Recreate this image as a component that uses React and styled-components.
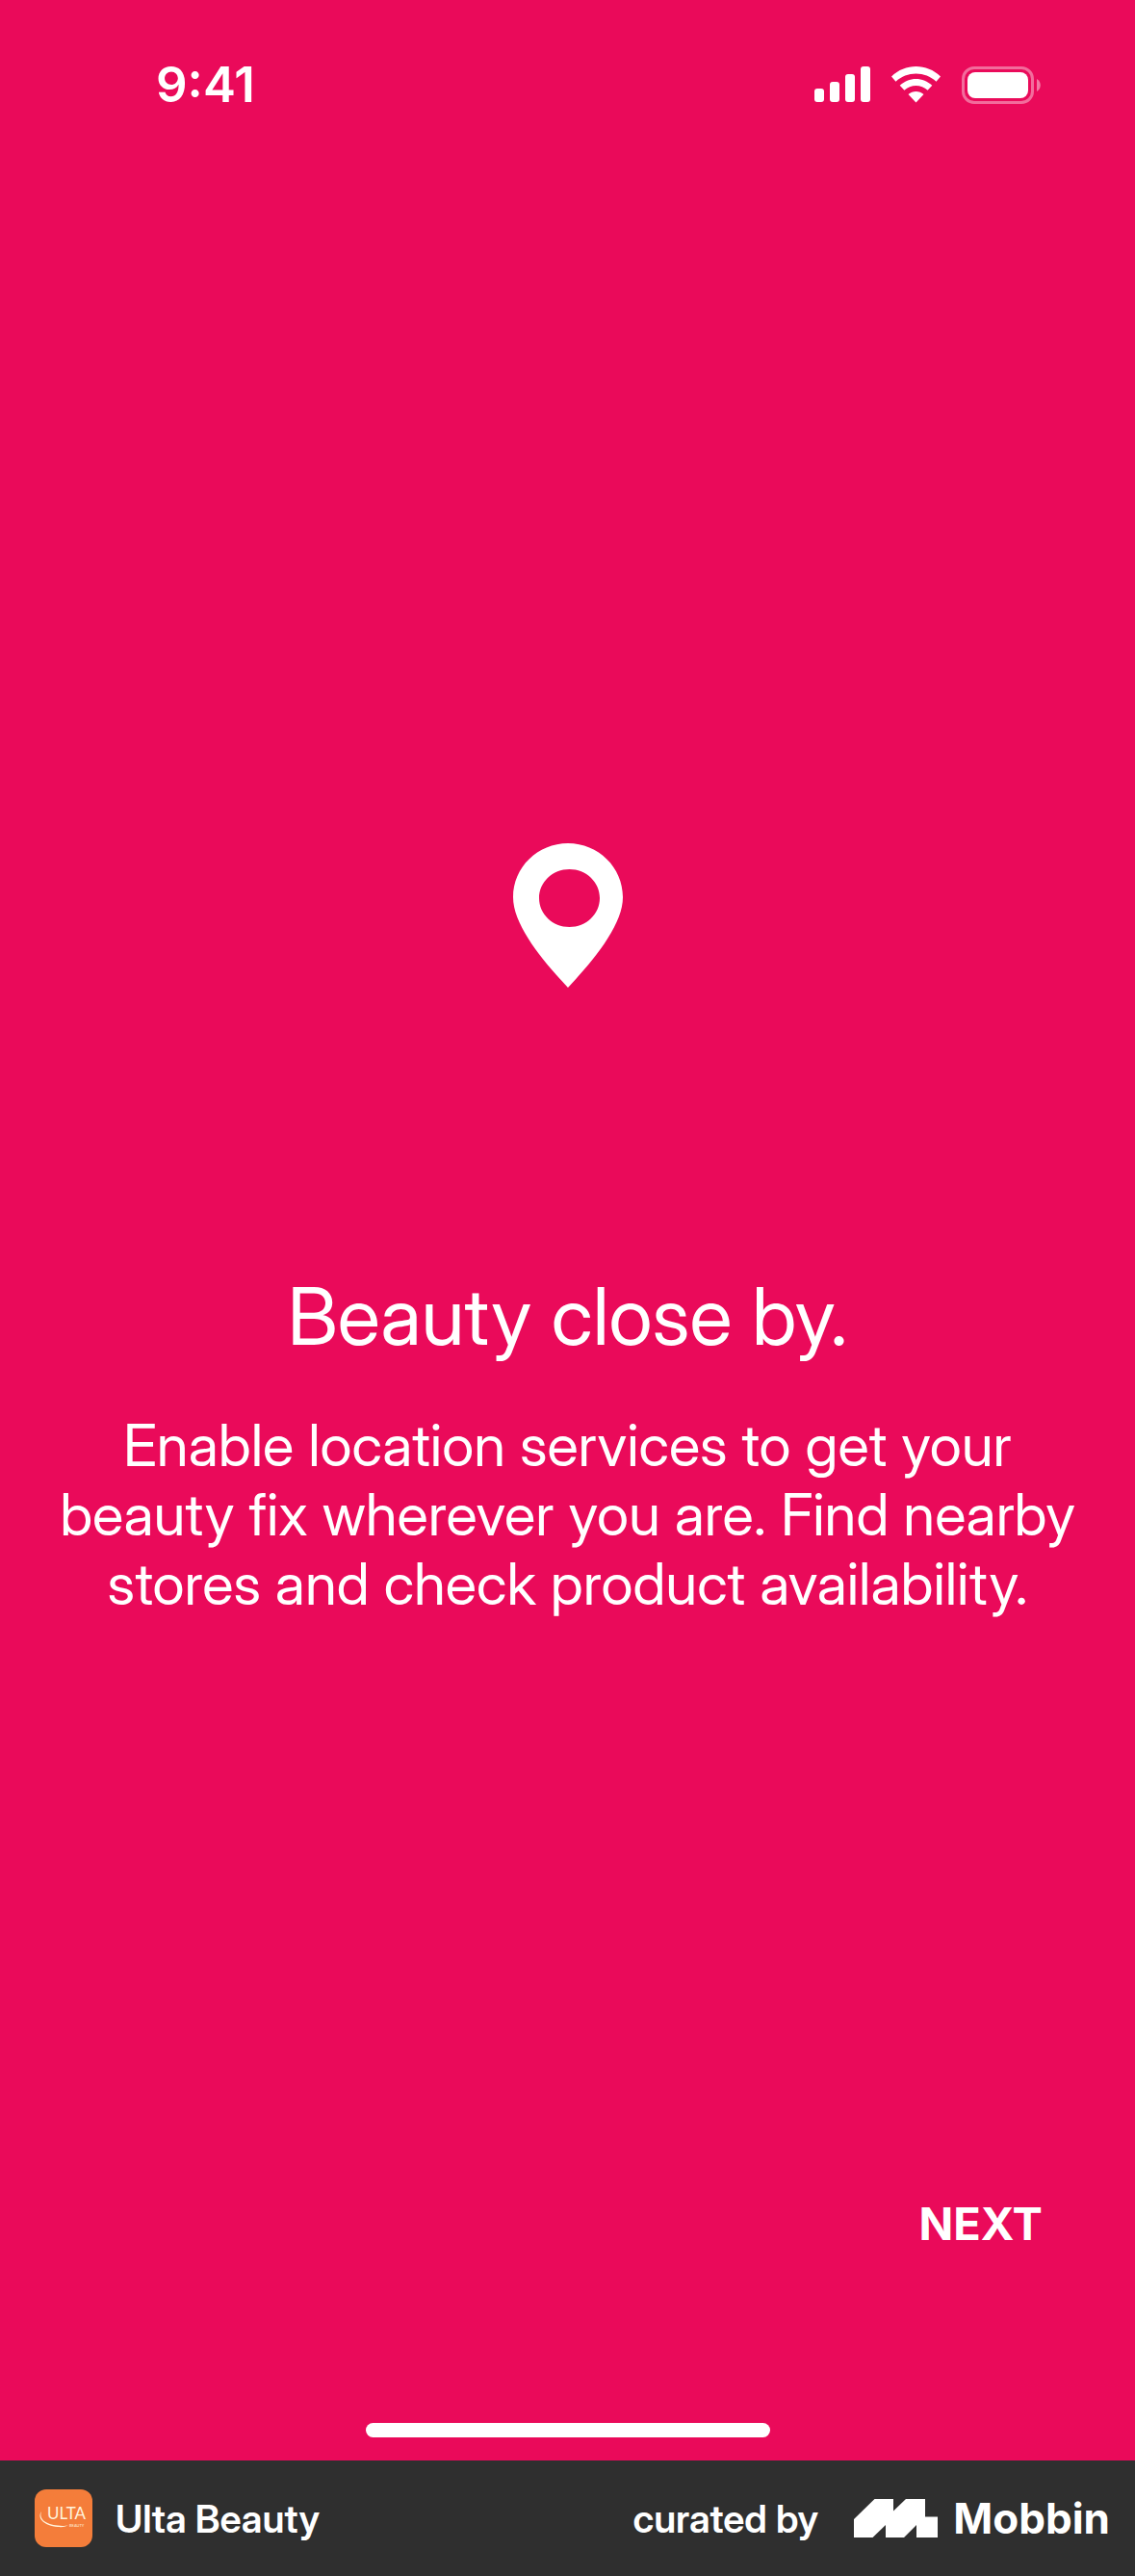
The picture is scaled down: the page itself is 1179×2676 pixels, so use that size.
import React from 'react';
import styled, { createGlobalStyle } from 'styled-components';

const PINK = '#ea0a5a';
const DISPLAY_FONT = '"Inter Display", Inter, "Liberation Sans", sans-serif';

const GlobalStyle = createGlobalStyle`
  *, *::before, *::after { box-sizing: border-box; }
  body {
    margin: 0;
    background: ${PINK};
    color: #fff;
    font-family: Inter, "Liberation Sans", sans-serif;
  }
`;

const Page = styled.div`
  display: flex;
  flex-direction: column;
  min-height: 100vh;
`;

const Screen = styled.main`
  flex: 1;
  display: flex;
  flex-direction: column;
  align-items: center;
  background: ${PINK};
`;

const StatusBar = styled.header`
  align-self: stretch;
  display: flex;
  align-items: center;
  justify-content: space-between;
  height: 176px;
  padding: 0 98px 0 162px;
`;

const Time = styled.time`
  font-size: 51px;
  line-height: 60px;
  font-weight: 600;
`;

const StatusIcons = styled.div`
  display: flex;
  align-items: center;
  gap: 22px;

  svg { display: block; }
`;

const Hero = styled.section`
  display: flex;
  flex-direction: column;
  align-items: center;
  padding: 700px 48px 0;
  font-family: ${DISPLAY_FONT};
  text-align: center;
`;

const Title = styled.h1`
  margin: 292px 0 0;
  font-size: 82px;
  line-height: 100px;
  font-weight: 400;
`;

const Copy = styled.p`
  margin: 47px 0 0;
  font-size: 60px;
  line-height: 72px;
`;

const NextButton = styled.button`
  align-self: flex-end;
  margin: auto 72px 0 0;
  padding: 24px;
  border: 0;
  background: none;
  color: inherit;
  font: inherit;
  font-size: 47px;
  line-height: 60px;
  font-weight: 700;
  cursor: pointer;
`;

const HomeIndicator = styled.div`
  width: 420px;
  height: 15px;
  margin: 153px 0 24px;
  border-radius: 8px;
  background: #fff;
`;

const Footer = styled.footer`
  display: flex;
  align-items: center;
  justify-content: space-between;
  height: 120px;
  padding: 0 26px 0 36px;
  background: #2f2f2f;
`;

const FooterGroup = styled.div`
  display: flex;
  align-items: center;
  gap: ${(p) => p.$gap}px;

  svg { display: block; }
`;

const FooterText = styled.span`
  padding-top: 2px;
  font-family: ${DISPLAY_FONT};
  font-size: 40px;
  line-height: 48px;
  font-weight: 600;
`;

const BrandName = styled.span`
  font-size: 44px;
  line-height: 48px;
  font-weight: 700;
`;

const SignalIcon = () => (
  <svg width="58" height="38" viewBox="0 0 58 38" fill="#fff" aria-hidden="true">
    <rect x="0" y="23" width="10" height="14" rx="3" />
    <rect x="16" y="16" width="10" height="21" rx="3" />
    <rect x="32" y="8" width="10" height="29" rx="3" />
    <rect x="48" y="0" width="10" height="37" rx="3" />
  </svg>
);

const WifiIcon = () => (
  <svg width="51" height="38" viewBox="0 0 51 38" fill="#fff" aria-hidden="true">
    <path d="M0 10.500C14-3.500 37-3.500 51 10.500L46.500 15.700C35 4.700 16 4.700 4.500 15.700Z" />
    <path d="M8.700 19.800C18 10.600 33 10.600 42.300 19.800L37.600 24.800C31 18.300 20 18.300 13.400 24.800Z" />
    <path d="M17.500 29C22 25 29 25 33.500 29L25.500 37.500Z" />
  </svg>
);

const BatteryIcon = () => (
  <svg width="82" height="39" viewBox="0 0 82 39" aria-hidden="true">
    <rect x="1.500" y="1.500" width="72" height="36" rx="11.500" fill="none" stroke="#fff" strokeOpacity=".4" strokeWidth="3" />
    <rect x="6" y="6" width="63" height="27" rx="8" fill="#fff" />
    <path d="M78 13C83 15.500 83 23.500 78 26Z" fill="#fff" fillOpacity=".45" />
  </svg>
);

const PinIcon = () => (
  <svg width="114" height="150" viewBox="0 0 114 150" fill="#fff" aria-hidden="true">
    <path
      fillRule="evenodd"
      d="M57 0C25.500 0 0 25 0 56C0 85 30 121 57 150C84 121 114 85 114 56C114 25 88.500 0 57 0ZM58.500 27C75.900 27 90 40.400 90 57S75.900 87 58.500 87S27 73.600 27 57S41.100 27 58.500 27Z"
    />
  </svg>
);

const UltaIcon = () => (
  <svg width="60" height="60" viewBox="0 0 60 60" role="img" aria-label="Ulta Beauty">
    <rect width="60" height="60" rx="12" fill="#f47d3a" />
    <text x="13" y="31" fill="#fff3dc" fontFamily="Lato, sans-serif" fontSize="17">ULTA</text>
    <text x="36" y="39" fill="#fff3dc" fontFamily="Lato, sans-serif" fontSize="4">BEAUTY</text>
    <path d="M7 23C2 30 10 38 24 39C30 39.500 33 38.500 35 37C32 38 29 38.200 24 37.600C12 36.500 4 31 7 23Z" fill="#fff3dc" />
  </svg>
);

const MobbinIcon = () => (
  <svg width="87" height="40" viewBox="0 0 87 40" fill="#fff" aria-hidden="true">
    <path d="M0 21L21.500 0H41V12.500L54 0H74V18.500H87V40H65V27L52 40H33V27L19.500 40H0Z" />
  </svg>
);

export default function App() {
  return (
    <Page>
      <GlobalStyle />
      <Screen>
        <StatusBar>
          <Time>9:41</Time>
          <StatusIcons>
            <SignalIcon />
            <WifiIcon />
            <BatteryIcon />
          </StatusIcons>
        </StatusBar>
        <Hero>
          <PinIcon />
          <Title>Beauty close by.</Title>
          <Copy>
            Enable location services to get your beauty fix wherever you are. Find nearby stores and
            check product availability.
          </Copy>
        </Hero>
        <NextButton type="button">NEXT</NextButton>
        <HomeIndicator />
      </Screen>
      <Footer>
        <FooterGroup $gap={24}>
          <UltaIcon />
          <FooterText>Ulta Beauty</FooterText>
        </FooterGroup>
        <FooterGroup $gap={37}>
          <FooterText>curated by</FooterText>
          <FooterGroup $gap={16}>
            <MobbinIcon />
            <BrandName>Mobbin</BrandName>
          </FooterGroup>
        </FooterGroup>
      </Footer>
    </Page>
  );
}
